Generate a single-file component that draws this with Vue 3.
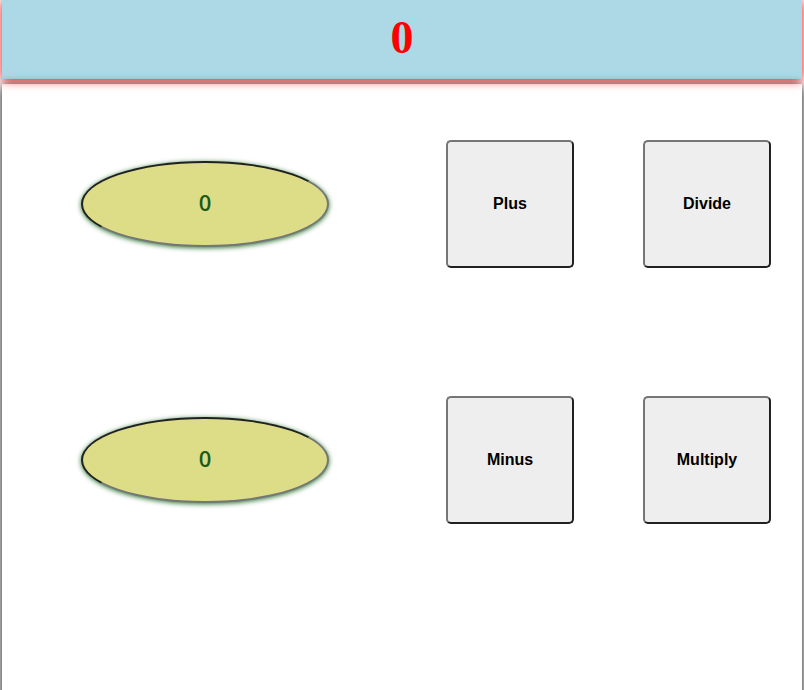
<script setup>
import { ref } from 'vue'

const result = ref(0)
const first = ref('0')
const second = ref('0')

const apply = (operation) => {
  const a = Number(first.value)
  const b = Number(second.value)
  result.value = operation(a, b)
}
</script>

<template>
  <main class="calculator">
    <header class="result"><output>{{ result }}</output></header>
    <section class="board">
      <div class="fields">
        <div class="cell"><input v-model="first" class="number" type="text" aria-label="First number"></div>
        <div class="cell"><input v-model="second" class="number" type="text" aria-label="Second number"></div>
      </div>
      <div class="operations">
        <div class="cell"><button class="operation" type="button" @click="apply((a, b) => a + b)">Plus</button></div>
        <div class="cell"><button class="operation" type="button" @click="apply((a, b) => a / b)">Divide</button></div>
        <div class="cell"><button class="operation" type="button" @click="apply((a, b) => a - b)">Minus</button></div>
        <div class="cell"><button class="operation" type="button" @click="apply((a, b) => a * b)">Multiply</button></div>
      </div>
    </section>
  </main>
</template>

<style>
body {
  background: #fff;
}
</style>

<style scoped>
.calculator {
  box-sizing: border-box;
  height: 100vh;
  min-height: 600px;
  padding: 0 2px;
  display: flex;
  flex-direction: column;
  gap: 5px;
  overflow: hidden;
}

.result {
  box-sizing: border-box;
  height: 79px;
  padding-bottom: 4px;
  display: flex;
  align-items: center;
  justify-content: center;
  background: lightblue;
  box-shadow: 0 1px 10px red;
  color: red;
  font: bold 46px "Liberation Serif", serif;
}

.board {
  flex: 1;
  margin-bottom: -16px;
  display: grid;
  grid-template-columns: 406fr 394fr;
  grid-template-rows: 1fr;
  align-items: start;
  box-shadow: 0 2px 10px #000;
}

.fields,
.operations {
  margin-top: -8px;
  display: grid;
  grid-auto-rows: 256px;
}

.operations {
  grid-template-columns: 204fr 190fr;
}

.cell {
  display: flex;
  align-items: center;
  justify-content: center;
}

.number {
  box-sizing: border-box;
  width: 248px;
  height: 86px;
  padding: 0 2px 4px;
  border: 2px inset #767676;
  border-radius: 50%;
  background: #dedd87;
  box-shadow: 0 1px 5px rgb(0 90 10 / 85%);
  color: #1a5c1a;
  font: 600 22px "Open Sans", sans-serif;
  text-align: center;
}

.operation {
  box-sizing: border-box;
  width: 128px;
  height: 128px;
  border: 2px outset #767676;
  border-radius: 5px;
  background: #eee;
  color: #000;
  font: bold 16px "Liberation Sans", sans-serif;
}
</style>
